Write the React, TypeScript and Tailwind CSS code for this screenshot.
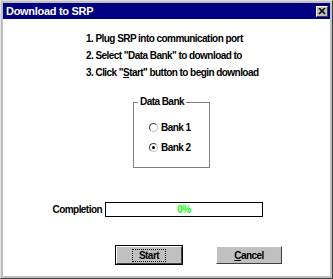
const font = "font-['Liberation_Sans',Arial,sans-serif]";

function Radio({ checked, label }: { checked?: boolean; label: string }) {
  return (
    <div className="flex items-center gap-[3px] h-[12px]">
      <span className="w-[9px] h-[9px] rounded-full border border-[#404040] border-r-[#c0c0c0] border-b-[#c0c0c0] bg-white flex items-center justify-center">
        {checked && <span className="w-[3px] h-[3px] rounded-full bg-black" />}
      </span>
      <span>{label}</span>
    </div>
  );
}

function WinButton({ children, focused }: { children: React.ReactNode; focused?: boolean }) {
  return (
    <button
      className={`w-[66px] h-[18px] bg-[#c0c0c0] border border-t-white border-l-white border-r-[#404040] border-b-[#404040] flex items-center justify-center ${
        focused ? 'outline outline-1 outline-black' : ''
      }`}
    >
      <span className={focused ? 'px-[6px] border border-dotted border-black leading-[11px]' : ''}>{children}</span>
    </button>
  );
}

export default function App() {
  return (
    <div className={`${font} w-[333px] h-[279px] bg-[#c0c0c0] border border-t-[#dfdfdf] border-l-[#dfdfdf] border-r-[#404040] border-b-[#404040] p-[2px] flex flex-col text-[10px] tracking-[-0.55px] font-bold text-black`}>
      {/* Title bar */}
      <div className="h-[16px] bg-[#000080] flex items-center justify-between pl-[3px] pr-[2px] shrink-0">
        <span className="text-white text-[11px] tracking-[-0.3px] leading-none">Download to SRP</span>
        <span className="w-[12px] h-[11px] bg-[#c0c0c0] border border-t-white border-l-white border-r-[#404040] border-b-[#404040] flex items-center justify-center">
          <svg width="8" height="7" viewBox="0 0 8 7">
            <path d="M1 0 L7 6 M7 0 L1 6" stroke="black" strokeWidth="1.6" />
          </svg>
        </span>
      </div>

      {/* Body */}
      <div className="flex-1 bg-white flex flex-col">
        {/* Steps */}
        <div className="pl-[83px] pt-[14px] flex flex-col gap-[5px] leading-[12px]">
          <p>1. Plug SRP into communication port</p>
          <p>2. Select "Data Bank" to download to</p>
          <p>
            3. Click "<span className="underline">S</span>tart" button to begin download
          </p>
        </div>

        {/* Data Bank group */}
        <div className="mt-[23px] ml-[130px] w-[77px] h-[66px] border border-[#808080] relative flex flex-col gap-[8px] pl-[15px] pt-[18px]">
          <span className="absolute -top-[7px] left-[4px] bg-white px-[2px] leading-[12px]">Data Bank</span>
          <Radio label="Bank 1" />
          <Radio label="Bank 2" checked />
        </div>

        {/* Completion */}
        <div className="mt-[34px] flex items-center">
          <span className="w-[102px] text-right pr-[3px]">Completion</span>
          <div className="w-[158px] h-[15px] border border-black flex items-center justify-center text-[#00ff00]">
            0%
          </div>
        </div>

        {/* Buttons */}
        <div className="mt-[29px] flex pl-[113px] gap-[34px]">
          <WinButton focused>Start</WinButton>
          <WinButton>
            <span className="underline">C</span>ancel
          </WinButton>
        </div>
      </div>
    </div>
  );
}
